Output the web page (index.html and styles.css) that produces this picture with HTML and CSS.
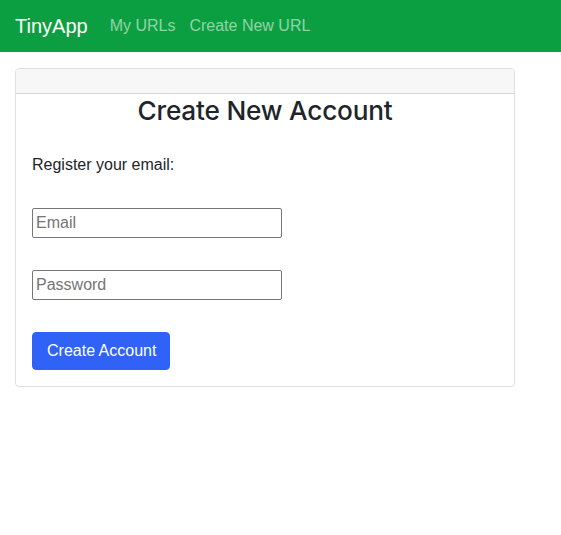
FILE: index.html
```html
<!DOCTYPE html>
<html>
<head>
<meta charset="utf-8">
<link rel="stylesheet" href="styles.css">
</head>
<body>
<nav class="navbar">
  <a class="brand" href="#">TinyApp</a>
  <a class="nav-link" href="#">My URLs</a>
  <a class="nav-link" href="#">Create New URL</a>
</nav>
<main class="container">
  <div class="card">
    <div class="card-header"></div>
    <h3 class="title">Create New Account</h3>
    <div class="card-body">
      <p class="lead-text">Register your email:</p>
      <form class="form">
        <input class="field" type="email" placeholder="Email">
        <input class="field" type="password" placeholder="Password">
        <button class="btn" type="button">Create Account</button>
      </form>
    </div>
  </div>
</main>
</body>
</html>
```
FILE: styles.css
```css
* { box-sizing: border-box; }
body {
  margin: 0;
  font-family: "Liberation Sans", Arial, sans-serif;
  font-size: 16px;
  line-height: 1.5;
  color: #212529;
  background: #fff;
}
.navbar {
  display: flex;
  align-items: center;
  height: 52px;
  padding: 0 16px 0 15px;
  background: #0c9f41;
}
.brand {
  color: #fff;
  font-size: 20px;
  text-decoration: none;
  margin-right: 22px;
}
.nav-link {
  color: rgba(255, 255, 255, 0.55);
  text-decoration: none;
  margin-right: 14px;
}
.container {
  padding: 16px 15px;
}
.card {
  width: 500px;
  border: 1px solid rgba(0, 0, 0, 0.125);
  border-radius: 4px;
  overflow: hidden;
}
.card-header {
  height: 25px;
  background: #f7f7f7;
  border-bottom: 1px solid rgba(0, 0, 0, 0.125);
}
.title {
  margin: 0 0 8px;
  font-family: Inter, "Liberation Sans", sans-serif;
  font-size: 26.2px;
  font-weight: 500;
  line-height: 34px;
  text-align: center;
  letter-spacing: -0.2px;
}
.card-body {
  padding: 16px;
}
.lead-text {
  margin: 1px 0 31px;
}
.form {
  display: flex;
  flex-direction: column;
  align-items: flex-start;
  gap: 32px;
}
.field {
  width: 250px;
  height: 30px;
  padding: 2px 3px;
  border: 1px solid #767676;
  border-radius: 2px;
  font-family: inherit;
  font-size: 16px;
  color: #212529;
}
.field::placeholder { color: #757575; }
.btn {
  height: 38px;
  padding: 6px 13px 6px 14px;
  border: 1px solid #3162f8;
  border-radius: 4px;
  background: #3162f8;
  color: #fff;
  font-family: inherit;
  font-size: 16px;
  line-height: 24px;
}
```
